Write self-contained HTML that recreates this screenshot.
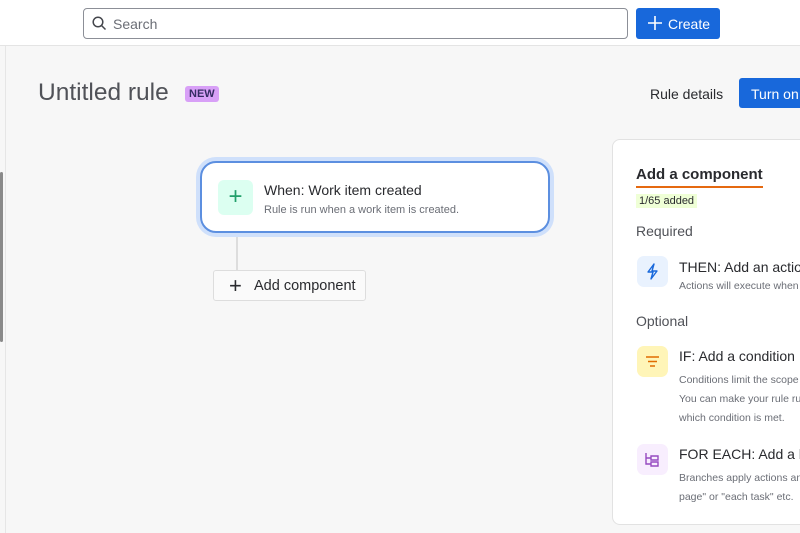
<!DOCTYPE html>
<html><head><style>
*{box-sizing:border-box;margin:0;padding:0}
body{width:800px;height:533px;overflow:hidden;background:#f7f7f7;font-family:"Liberation Sans",sans-serif;position:relative;color:#292a2e}
.top{position:absolute;left:0;top:0;width:800px;height:46px;background:#fff;border-bottom:1px solid #e4e4e4}
.search{position:absolute;left:83px;top:8px;width:545px;height:31px;border:1px solid #8c8f97;border-radius:4px;background:#fff}
.search span{position:absolute;left:29px;top:7px;font-size:14px;color:#6b6e76}
.create{position:absolute;left:636px;top:8px;width:84px;height:31px;background:#1868db;border-radius:3px;color:#fff;font-size:14px}
.create span{position:absolute;left:32px;top:8px}
.side{position:absolute;left:5px;top:46px;width:1px;height:487px;background:#e6e6e6}
.h1{position:absolute;left:38px;top:79px;font-size:24.5px;color:#505258}
.new{position:absolute;left:185px;top:86px;background:#d8a0f7;color:#352c63;font-size:11px;font-weight:bold;padding:2px 4px;border-radius:3px}
.rd{position:absolute;left:650px;top:86px;font-size:14px;color:#292a2e}
.on{position:absolute;left:739px;top:78px;width:70px;height:30px;background:#1868db;border-radius:3px;color:#fff;font-size:14px;padding:8px 0 0 12px}
.card{position:absolute;left:200px;top:161px;width:350px;height:72px;background:#fff;border:2px solid #5c8fe0;border-radius:16px;box-shadow:0 0 0 4px #cfe0fb}
.gi{position:absolute;left:16px;top:17px;width:35px;height:35px;background:#dcfff1;border-radius:6px;color:#22a06b;font-size:24px;text-align:center;line-height:33px}
.t1{position:absolute;left:62px;top:19px;font-size:14px}
.t2{position:absolute;left:62px;top:41px;font-size:11px;color:#6b6e76}
.line{position:absolute;left:236px;top:237px;width:2px;height:34px;background:#ddd}
.add{position:absolute;left:213px;top:270px;width:153px;height:31px;border:1px solid #ddd;background:#fafafa;border-radius:3px;font-size:14.5px;color:#292a2e}
.add span{position:absolute;left:40px;top:7px}
.add i{position:absolute;left:15px;top:2px;font-style:normal;font-size:22px;font-weight:normal}
.panel{position:absolute;left:612px;top:139px;width:200px;height:386px;background:#fff;border:1px solid #e2e2e2;border-radius:8px}
.p{position:absolute;white-space:nowrap}
.ic{position:absolute;left:24px;width:31px;height:31px;border-radius:7px}
</style></head><body>
<div class="top">
<div class="search"><svg style="position:absolute;left:8px;top:7px" width="15" height="15" viewBox="0 0 15 15"><circle cx="6" cy="6" r="4.8" fill="none" stroke="#44464c" stroke-width="1.5"/><path d="M9.5 9.5L13.5 13.5" stroke="#44464c" stroke-width="1.5"/></svg><span>Search</span></div>
<div class="create"><svg style="position:absolute;left:12px;top:8px" width="14" height="14"><path d="M7 0V14M0 7H14" stroke="#fff" stroke-width="1.6"/></svg><span>Create</span></div>
</div>
<div class="side"></div>
<div style="position:absolute;left:0;top:172px;width:3px;height:170px;background:#8a8a8a;border-radius:2px"></div>
<div class="h1">Untitled rule</div><div class="new">NEW</div>
<div class="rd">Rule details</div><div class="on">Turn on</div>
<div class="card"><div class="gi">+</div><div class="t1">When: Work item created</div><div class="t2">Rule is run when a work item is created.</div></div>
<div class="line"></div>
<div class="add"><i>+</i><span>Add component</span></div>
<div class="panel">
<div class="p" style="left:23px;top:26px;font-size:15px;font-weight:bold;color:#292a2e">Add a component</div>
<div style="position:absolute;left:23px;top:46px;width:127px;height:2px;background:#e56910"></div>
<div class="p" style="left:23px;top:54px;font-size:11px;background:#efffd6;padding:1px 3px">1/65 added</div>
<div class="p" style="left:23px;top:83px;font-size:14px;color:#505258">Required</div>
<div class="ic" style="top:116px;background:#e9f2fe"><svg width="31" height="31"><path d="M17 8L11 16H16L14 23L20 15H15Z" fill="none" stroke="#1868db" stroke-width="1.4" stroke-linejoin="round"/></svg></div>
<div class="p" style="left:66px;top:119px;font-size:14px">THEN: Add an action</div>
<div class="p" style="left:66px;top:140px;font-size:10.5px;color:#6b6e76">Actions will execute when</div>
<div class="p" style="left:23px;top:173px;font-size:14px;color:#505258">Optional</div>
<div class="ic" style="top:206px;background:#fff5b8"><svg width="31" height="31"><path d="M9 11H22M11 15.5H20M13 20H18" stroke="#e06c00" stroke-width="1.5"/></svg></div>
<div class="p" style="left:66px;top:208px;font-size:14px">IF: Add a condition</div>
<div class="p" style="left:66px;top:231px;font-size:10.5px;color:#6b6e76;line-height:19px">Conditions limit the scope<br>You can make your rule ru<br>which condition is met.</div>
<div class="ic" style="top:304px;background:#f8eefe"><svg width="31" height="31"><path d="M9 9V20H14M9 14H14M14 12H21V16H14ZM14 18H21V22H14Z" fill="none" stroke="#964ac0" stroke-width="1.4"/></svg></div>
<div class="p" style="left:66px;top:306px;font-size:14px">FOR EACH: Add a br</div>
<div class="p" style="left:66px;top:329px;font-size:10.5px;color:#6b6e76;line-height:19px">Branches apply actions an<br>page" or "each task" etc.</div>
</div>
</body></html>
